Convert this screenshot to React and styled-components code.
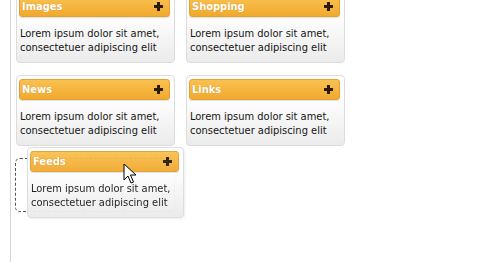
import React from 'react';
import styled, {createGlobalStyle} from 'styled-components';

const GlobalStyle = createGlobalStyle`
    html, body {
        margin: 0;
        padding: 0;
        background: #fff;
        overflow: hidden;
    }
`

const widgets = [
    {title: 'Images'},
    {title: 'Shopping'},
    {title: 'News'},
    {title: 'Links'},
];

const lorem = ['Lorem ipsum dolor sit amet,', 'consectetuer adipiscing elit'];

function Plus() {
    return (
        <svg width="9" height="9" viewBox="0 0 9 9">
            <path d="M3 0h3v3h3v3H6v3H3V6H0V3h3z" fill="#2a1a08"/>
        </svg>
    );
}

function Cursor() {
    return (
        <svg width="14" height="22" viewBox="0 0 14 22">
            <path d="M1 1 L1 17 L5 13 L8 20 L10.5 19 L7.5 12 L13 12 Z"
                  fill="#fff" stroke="#000" strokeWidth="1" strokeLinejoin="miter"/>
        </svg>
    );
}

function Widget({title}) {
    return (
        <Card>
            <Header>
                <Title>{title}</Title>
                <Plus/>
            </Header>
            <Body>
                {lorem.map(l => <Line key={l}>{l}</Line>)}
            </Body>
        </Card>
    );
}

function App() {
    return (
        <Page>
            <GlobalStyle/>
            <Column>
                <Grid>
                    {widgets.map(w => <Widget key={w.title} title={w.title}/>)}
                    <Placeholder/>
                </Grid>
                <Dragging>
                    <Widget title="Feeds"/>
                </Dragging>
                <CursorWrap>
                    <Cursor/>
                </CursorWrap>
            </Column>
        </Page>
    );
}

export default App;

const Page = styled.div`
    width: 480px;
    height: 270px;
    overflow: hidden;
    font-family: 'DejaVu Sans Condensed', 'DejaVu Sans', Tahoma, sans-serif;
`

const Column = styled.div`
    position: relative;
    margin-left: 10px;
    height: 100%;
    border-left: 1px solid #d6d6d6;
    padding-left: 5px;
`

const Grid = styled.div`
    display: grid;
    grid-template-columns: 159px 159px;
    column-gap: 11px;
    row-gap: 12px;
    margin-top: -8px;
`

const Card = styled.div`
    box-sizing: border-box;
    height: 71px;
    border: 1px solid #dcdcdc;
    border-radius: 4px;
    background: linear-gradient(#ffffff 30%, #ebebeb);
    padding: 3px 4px 0 2px;
`

const Header = styled.div`
    box-sizing: border-box;
    height: 21px;
    display: flex;
    align-items: center;
    justify-content: space-between;
    padding: 0 6px 0 2px;
    border: 1px solid #e4a032;
    border-radius: 3px;
    background: linear-gradient(#f9c150, #f1a92e);
    box-shadow: 0 1px 1px rgba(0, 0, 0, 0.12);
`

const Title = styled.span`
    color: #fff;
    font-weight: bold;
    font-size: 11px;
    text-shadow: 0 0 1px rgba(160, 90, 0, 0.4);
`

const Body = styled.div`
    padding: 10px 0 0 1px;
`

const Line = styled.div`
    font-size: 11px;
    line-height: 14px;
    color: #151515;
    white-space: nowrap;
`

const Placeholder = styled.div`
    box-sizing: border-box;
    height: 54px;
    margin-left: -1px;
    border: 1px dashed #555;
    border-radius: 5px;
`

const Dragging = styled.div`
    position: absolute;
    left: 16px;
    top: 155px;
    width: 157px;
    z-index: 2;
    opacity: 0.95;
    filter: drop-shadow(1px 1px 1px rgba(0, 0, 0, 0.08));
`

const CursorWrap = styled.div`
    position: absolute;
    left: 112px;
    top: 171px;
    z-index: 3;
`
